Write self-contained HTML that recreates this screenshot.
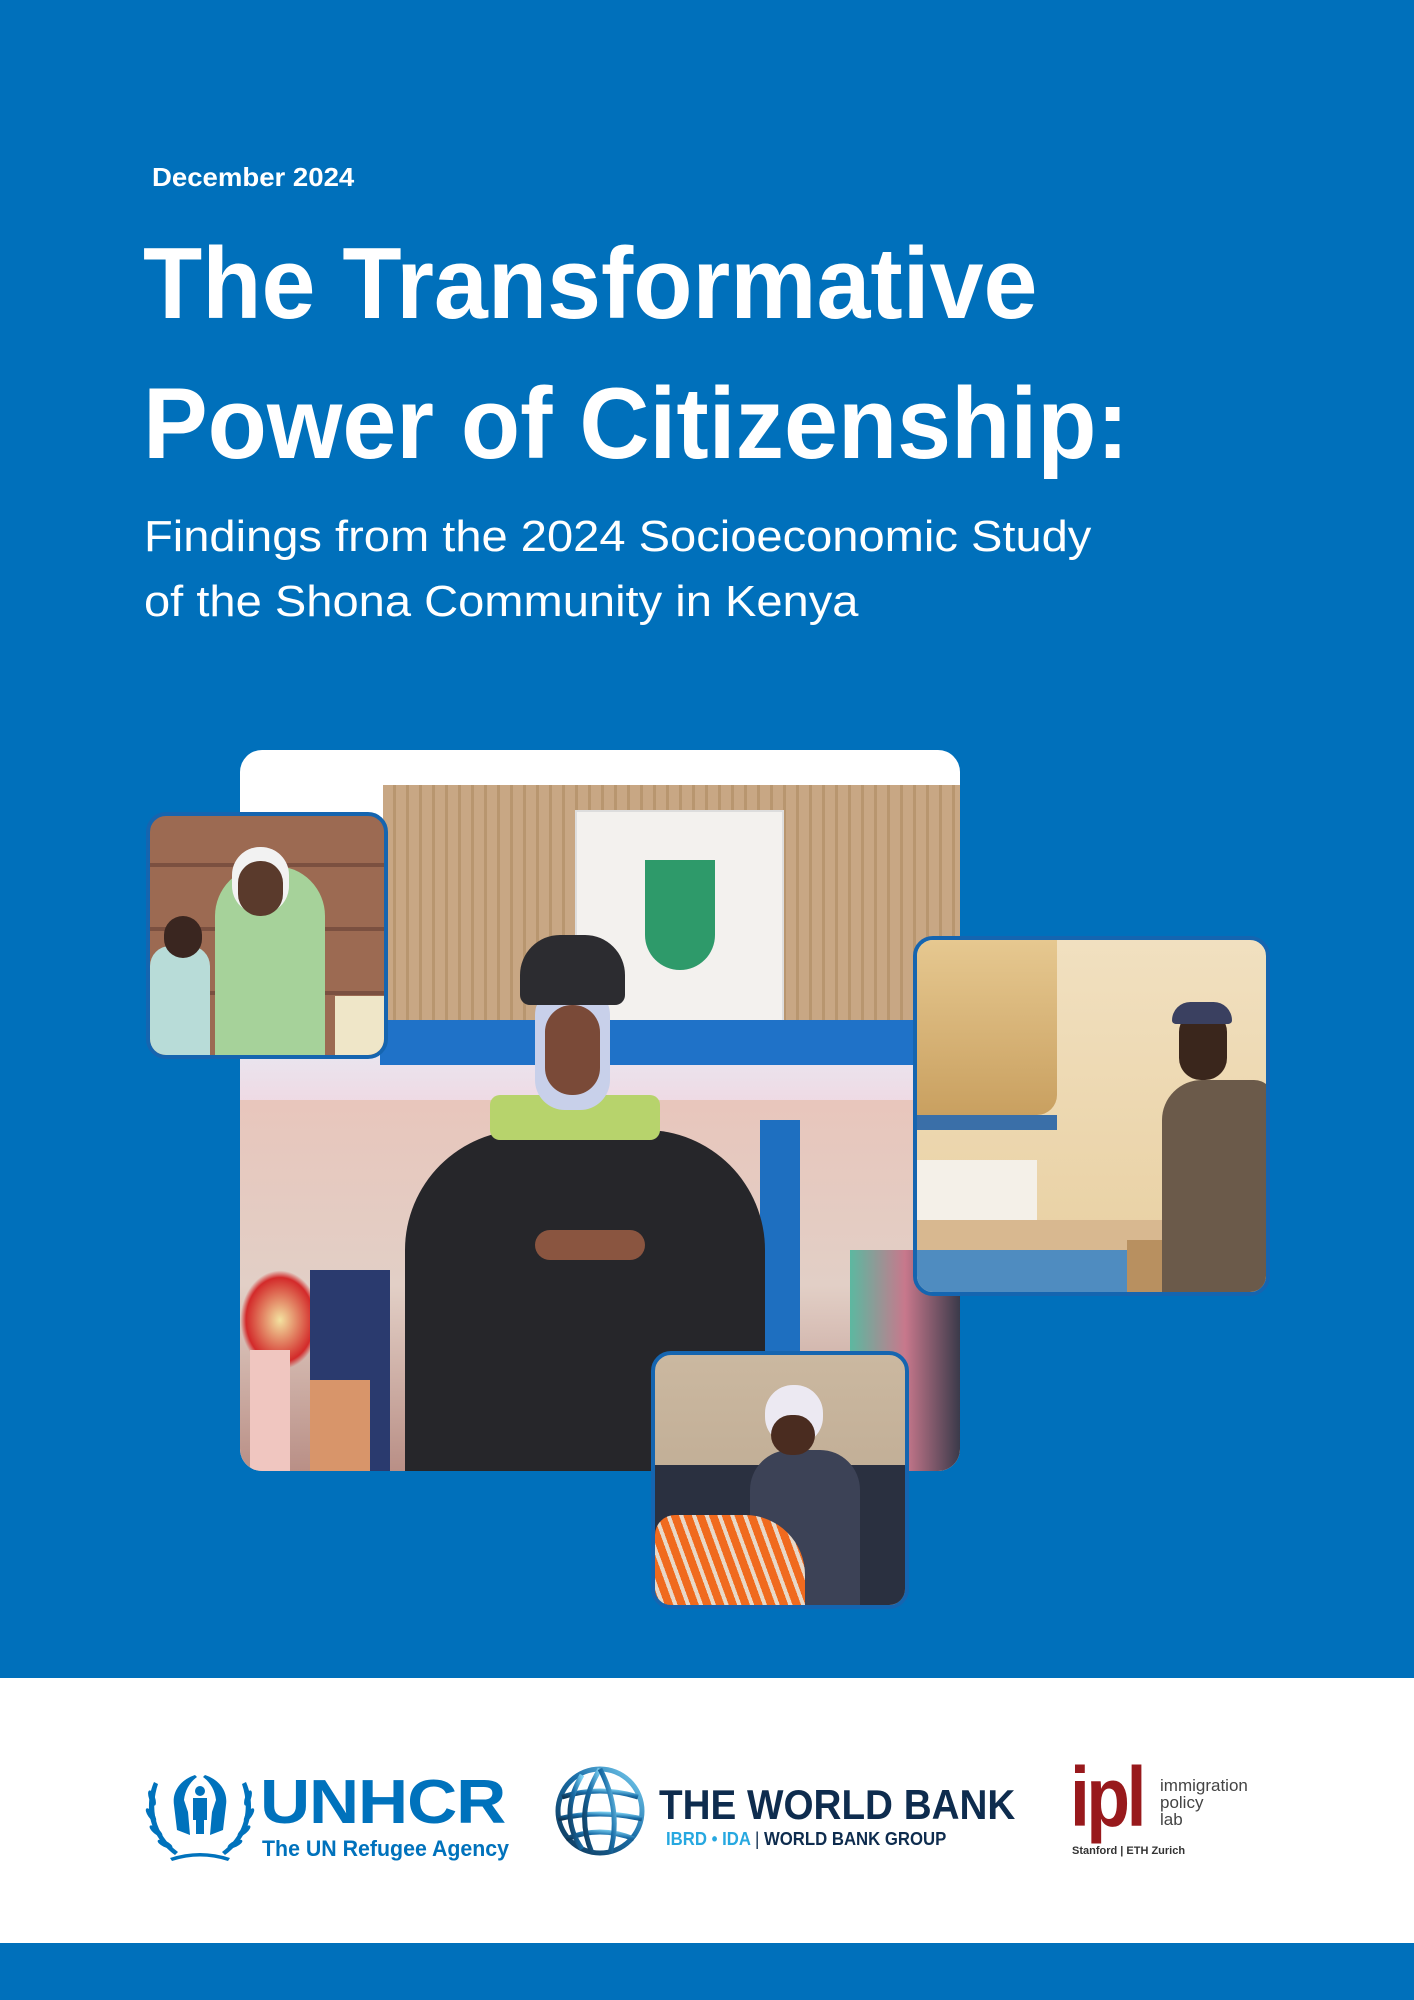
<!DOCTYPE html>
<html><head><meta charset="utf-8"><style>
html,body{margin:0;padding:0}
body{width:1414px;height:2000px;position:relative;overflow:hidden;background:#0070bb;font-family:"Liberation Sans",sans-serif}
.abs{position:absolute}
.t{color:#fff;white-space:nowrap;transform-origin:left top}
.ph{position:absolute;overflow:hidden;border-radius:22px}
.sm{border:4px solid #1565b0;border-radius:20px;box-sizing:border-box}
</style></head><body>
<div class="abs t" style="left:152px;top:162px;font-size:26px;font-weight:bold;transform:scaleX(1.06)">December 2024</div>
<div class="abs t" style="left:143px;top:214px;font-size:101px;font-weight:bold;line-height:140px;transform:scaleX(0.96)">The Transformative<br>Power of Citizenship:</div>
<div class="abs t" style="left:144px;top:504px;font-size:44px;line-height:65px;transform:scaleX(1.07)">Findings from the 2024 Socioeconomic Study<br>of the Shona Community in Kenya</div>

<!-- main photo -->
<div class="ph" style="left:240px;top:750px;width:720px;height:721px;background:#fff">
 <div class="abs" style="left:143px;top:35px;width:577px;height:330px;background:repeating-linear-gradient(90deg,#c8a784 0 10px,#b8966f 10px 13px)"></div>
 <div class="abs" style="left:335px;top:60px;width:205px;height:215px;background:#f3f1ee;border:2px solid #ddd"></div>
 <div class="abs" style="left:405px;top:110px;width:70px;height:110px;background:#2e9a6a;border-radius:0 0 35px 35px"></div>
 <div class="abs" style="left:0;top:300px;width:720px;height:60px;background:linear-gradient(#e9e6f0,#f0d8e2)"></div>
 <div class="abs" style="left:140px;top:270px;width:580px;height:45px;background:#1f72c8"></div>
 <div class="abs" style="left:0;top:350px;width:720px;height:371px;background:linear-gradient(#e8c6bc,#e2cfc6 50%,#b98f86)"></div>
 <div class="abs" style="left:520px;top:370px;width:40px;height:300px;background:#1e6fc0"></div>
 <div class="abs" style="left:0;top:520px;width:80px;height:100px;background:radial-gradient(#f3e2a0,#d32a2a 60%,transparent 70%)"></div>
 <div class="abs" style="left:10px;top:600px;width:40px;height:121px;background:#f0c6c0"></div>
 <div class="abs" style="left:70px;top:520px;width:80px;height:201px;background:#2a3a6e"></div>
 <div class="abs" style="left:70px;top:630px;width:60px;height:91px;background:#d8956a"></div>
 <div class="abs" style="left:610px;top:500px;width:110px;height:221px;background:linear-gradient(90deg,#5cb8a0,#c8788c,#3a3a4a)"></div>
 <div class="abs" style="left:165px;top:380px;width:360px;height:341px;background:#26262a;border-radius:120px 120px 0 0"></div>
 <div class="abs" style="left:250px;top:345px;width:170px;height:45px;background:#b7d36c;border-radius:10px"></div>
 <div class="abs" style="left:295px;top:235px;width:75px;height:125px;background:#c8d0ea;border-radius:30px"></div>
 <div class="abs" style="left:305px;top:255px;width:55px;height:90px;background:#7a4a38;border-radius:27px"></div>
 <div class="abs" style="left:280px;top:185px;width:105px;height:70px;background:#2c2c30;border-radius:40px 40px 10px 10px"></div>
 <div class="abs" style="left:295px;top:480px;width:110px;height:30px;background:#8a5540;border-radius:15px"></div>
</div>

<!-- top-left photo -->
<div class="ph sm" style="left:146px;top:812px;width:242px;height:247px;background:repeating-linear-gradient(0deg,#9c6a52 0 60px,#7b5040 60px 64px)">
 <div class="abs" style="left:65px;top:50px;width:110px;height:200px;background:#a6d29a;border-radius:50px 50px 0 0"></div>
 <div class="abs" style="left:88px;top:45px;width:45px;height:55px;background:#5a3a2c;border-radius:22px;box-shadow:0 -8px 0 6px #f2f2f2"></div>
 <div class="abs" style="left:0;top:130px;width:60px;height:117px;background:#b8dcd8;border-radius:20px 20px 0 0"></div>
 <div class="abs" style="left:14px;top:100px;width:38px;height:42px;background:#3a2620;border-radius:20px"></div>
 <div class="abs" style="left:185px;top:180px;width:57px;height:67px;background:#efe6c8"></div>
</div>

<!-- right photo -->
<div class="ph sm" style="left:913px;top:936px;width:357px;height:360px;background:linear-gradient(#f1e0c0,#e8cfa0)">
 <div class="abs" style="left:0;top:0;width:140px;height:175px;background:linear-gradient(#e6c890,#c9a060);border-radius:0 0 20px 0"></div>
 <div class="abs" style="left:0;top:175px;width:140px;height:15px;background:#3a6fa8"></div>
 <div class="abs" style="left:0;top:220px;width:120px;height:60px;background:#f4f0e8"></div>
 <div class="abs" style="left:0;top:280px;width:250px;height:30px;background:#d8b890"></div>
 <div class="abs" style="left:0;top:310px;width:210px;height:50px;background:#4f8cc0"></div>
 <div class="abs" style="left:210px;top:300px;width:110px;height:60px;background:#b89060"></div>
 <div class="abs" style="left:245px;top:140px;width:112px;height:220px;background:#6b5a4a;border-radius:40px 20px 0 0"></div>
 <div class="abs" style="left:262px;top:70px;width:48px;height:70px;background:#3a261c;border-radius:22px"></div>
 <div class="abs" style="left:255px;top:62px;width:60px;height:22px;background:#3a4060;border-radius:20px 20px 4px 4px"></div>
</div>

<!-- bottom photo -->
<div class="ph sm" style="left:651px;top:1351px;width:258px;height:258px;background:linear-gradient(#cbb8a0,#b7a48c)">
 <div class="abs" style="left:0;top:110px;width:258px;height:148px;background:#2a3040"></div>
 <div class="abs" style="left:95px;top:95px;width:110px;height:163px;background:#3c4256;border-radius:40px 40px 0 0"></div>
 <div class="abs" style="left:110px;top:30px;width:58px;height:60px;background:#ece9f2;border-radius:28px"></div>
 <div class="abs" style="left:116px;top:60px;width:44px;height:40px;background:#4a2c20;border-radius:20px"></div>
 <div class="abs" style="left:0;top:160px;width:150px;height:98px;background:repeating-linear-gradient(70deg,#f06a1e 0 8px,#e8d8c8 8px 12px);border-radius:20px 60px 0 0"></div>
</div>

<!-- logos band -->
<div class="abs" style="left:0;top:1678px;width:1414px;height:265px;background:#fff"></div>
<div class="abs" style="left:0;top:1943px;width:1414px;height:57px;background:#0070bb"></div>

<svg class="abs" style="left:140px;top:1760px" width="120" height="110" viewBox="0 0 120 110">
 <g fill="#0072bc">
  <path d="M14 22 C4 45 8 75 35 95 L38 92 C14 74 10 48 18 24Z"/>
  <path d="M106 22 C116 45 112 75 85 95 L82 92 C106 74 110 48 102 24Z"/>
  <g>
   <ellipse cx="12" cy="38" rx="3" ry="8" transform="rotate(-20 12 38)"/>
   <ellipse cx="11" cy="55" rx="3" ry="8" transform="rotate(-35 11 55)"/>
   <ellipse cx="16" cy="71" rx="3" ry="8" transform="rotate(-50 16 71)"/>
   <ellipse cx="25" cy="84" rx="3" ry="8" transform="rotate(-65 25 84)"/>
   <ellipse cx="108" cy="38" rx="3" ry="8" transform="rotate(20 108 38)"/>
   <ellipse cx="109" cy="55" rx="3" ry="8" transform="rotate(35 109 55)"/>
   <ellipse cx="104" cy="71" rx="3" ry="8" transform="rotate(50 104 71)"/>
   <ellipse cx="95" cy="84" rx="3" ry="8" transform="rotate(65 95 84)"/>
  </g>
  <path d="M55 15 C40 20 32 32 34 45 L37 70 L50 75 L48 52 L44 40 C45 30 50 22 57 17Z"/>
  <path d="M65 15 C80 20 88 32 86 45 L83 70 L70 75 L72 52 L76 40 C75 30 70 22 63 17Z"/>
  <circle cx="60" cy="31" r="5"/>
  <path d="M53 38 H67 V60 H64 V74 H56 V60 H53Z"/>
  <path d="M30 98 Q60 88 90 98 L88 101 Q60 92 32 101Z"/>
 </g>
</svg>
<div class="abs" style="left:260px;top:1772px;font-size:62px;font-weight:bold;color:#0072bc;letter-spacing:-1px;transform:scaleX(1.12);transform-origin:left top;line-height:62px">UNHCR</div>
<div class="abs" style="left:262px;top:1836px;font-size:22px;font-weight:bold;color:#0072bc;white-space:nowrap;transform:scaleX(0.97);transform-origin:left top">The UN Refugee Agency</div>

<svg class="abs" style="left:552px;top:1765px" width="96" height="92" viewBox="0 0 96 92">
 <defs><linearGradient id="g" x1="1" y1="0" x2="0" y2="1"><stop offset="0" stop-color="#7fd4f5"/><stop offset="0.45" stop-color="#1a6ea8"/><stop offset="1" stop-color="#0e3554"/></linearGradient></defs>
 <g fill="none" stroke="url(#g)" stroke-width="5">
  <circle cx="48" cy="46" r="42"/>
  <path d="M10 32 Q48 20 86 32"/>
  <path d="M6 54 Q48 44 90 54"/>
  <path d="M14 74 Q48 60 82 74"/>
  <path d="M48 4 Q22 46 40 88"/>
  <path d="M48 4 Q70 46 58 88"/>
  <path d="M30 10 Q6 50 30 84"/>
 </g>
</svg>
<div class="abs" style="left:659px;top:1784px;font-size:42px;font-weight:bold;color:#0e2c4e;white-space:nowrap;transform:scaleX(0.92);transform-origin:left top;line-height:42px">THE WORLD BANK</div>
<div class="abs" style="left:666px;top:1830px;font-size:18px;font-weight:bold;white-space:nowrap;transform:scaleX(0.93);transform-origin:left top;line-height:18px"><span style="color:#27a8e0">IBRD • IDA</span> <span style="color:#0e2c4e;font-weight:normal">|</span> <span style="color:#0e2c4e">WORLD BANK GROUP</span></div>

<div class="abs" style="left:1070px;top:1755px;font-size:84px;font-weight:bold;color:#98191c;letter-spacing:-4px;line-height:84px;transform:scaleX(0.85);transform-origin:left top">ipl</div>
<div class="abs" style="left:1160px;top:1777px;font-size:17px;color:#444;line-height:17px">immigration<br>policy<br>lab</div>
<div class="abs" style="left:1072px;top:1845px;font-size:11px;font-weight:bold;color:#333;white-space:nowrap">Stanford | ETH Zurich</div>
</body></html>
